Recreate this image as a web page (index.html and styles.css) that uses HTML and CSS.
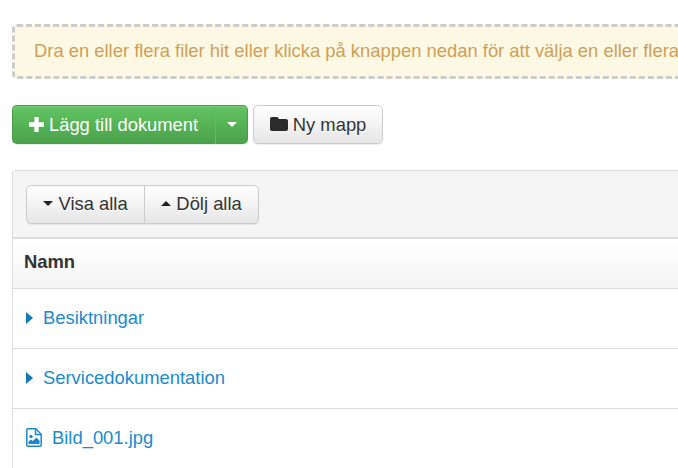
FILE: index.html
```html
<!DOCTYPE html>
<html lang="sv">
<head>
<meta charset="utf-8">
<title>Dokument</title>
<link rel="stylesheet" href="styles.css">
</head>
<body>
<main class="page">
  <div class="dropzone">Dra en eller flera filer hit eller klicka på knappen nedan för att välja en eller flera</div>
  <div class="toolbar">
    <div class="btn-group">
      <button class="btn btn-success btn-main"><svg class="icon-plus" viewBox="0 0 14 14" width="15" height="15"><path d="M5 0h4v5h5v4H9v5H5V9H0V5h5z" fill="#fff"/></svg> Lägg till dokument</button>
      <button class="btn btn-success btn-caret"><span class="caret caret-white"></span></button>
    </div>
    <button class="btn btn-default btn-folder"><svg class="icon-folder" viewBox="0 0 18 14" width="18" height="14"><path d="M2 0h4.500c1 0 1.600.5 2 1.300L9 2h7c1.100 0 2 .9 2 2v8c0 1.100-.9 2-2 2H2c-1.100 0-2-.9-2-2V2C0 .9.9 0 2 0z" fill="#2b2b2b"/></svg> Ny mapp</button>
  </div>
  <section class="panel">
    <div class="panel-head">
      <div class="btn-group">
        <button class="btn btn-default btn-toggle"><span class="caret caret-dark"></span> Visa alla</button>
        <button class="btn btn-default btn-toggle btn-join"><span class="caret caret-dark caret-up"></span> Dölj alla</button>
      </div>
    </div>
    <div class="row row-head">Namn</div>
    <div class="row"><span class="arrow"></span><a class="link" href="#">Besiktningar</a></div>
    <div class="row"><span class="arrow"></span><a class="link" href="#">Servicedokumentation</a></div>
    <div class="row"><svg class="icon-file" viewBox="0 0 16 19" width="16" height="19"><path d="M1.500.8h8.300l5.400 5.400v10.800c0 .7-.5 1.200-1.200 1.200H2c-.7 0-1.200-.5-1.200-1.200V2c0-.7.300-1.200.7-1.200z" fill="none" stroke="#1a88c9" stroke-width="1.500"/><path d="M9.500 1v5.500H15" fill="none" stroke="#1a88c9" stroke-width="1.500"/><circle cx="5" cy="8.500" r="1.700" fill="#1a88c9"/><path d="M2.500 16v-2.500l2.500-2 1.800 1.500 3.700-3.500 3 3V16z" fill="#1a88c9"/></svg><a class="link" href="#">Bild_001.jpg</a></div>
  </section>
</main>
</body>
</html>
```
FILE: styles.css
```css
html, body {
  margin: 0;
  height: 468px;
  overflow: hidden;
  background: #fff;
}
body {
  font-family: "Liberation Sans", Arial, sans-serif;
  font-size: 18.4px;
  color: #333;
}
.page {
  width: 1100px;
  padding: 24px 0 0 12px;
  box-sizing: border-box;
}
.dropzone {
  height: 55px;
  box-sizing: border-box;
  border: 3px dashed #ccc;
  border-radius: 5px;
  background: #fcf8e3;
  color: #cf9f58;
  padding: 0 19px;
  line-height: 47px;
  white-space: nowrap;
}
.toolbar {
  display: flex;
  gap: 5px;
  margin-top: 26px;
}
.btn-group {
  display: flex;
}
.btn {
  font: inherit;
  height: 39px;
  box-sizing: border-box;
  border: 1px solid #ccc;
  border-radius: 5px;
  padding: 0;
  display: flex;
  align-items: center;
  justify-content: center;
  white-space: pre;
}
.btn-success {
  color: #fff;
  border-color: #4a9a4a;
  background: linear-gradient(#62c462, #4ba24b);
  box-shadow: inset 0 1px 0 rgba(255,255,255,.15), 0 1px 1px rgba(0,0,0,.075);
}
.btn-main {
  width: 203px;
  padding-right: 1px;
  border-radius: 5px 0 0 5px;
  border-right: 0;
}
.btn-caret {
  width: 33px;
  border-radius: 0 5px 5px 0;
  border-left: 1px solid #6ab66a;
}
.btn-default {
  color: #333;
  background: linear-gradient(#fff, #e6e6e6);
  border-color: #ccc;
  box-shadow: inset 0 1px 0 rgba(255,255,255,.15), 0 1px 1px rgba(0,0,0,.075);
  text-shadow: 0 1px 0 #fff;
}
.btn-folder {
  width: 130px;
}
.icon-plus {
  display: block;
  margin-bottom: 1px;
}
.icon-folder {
  display: block;
  margin-bottom: 2px;
}
.caret {
  display: inline-block;
  width: 0;
  height: 0;
  border-left: 5.500px solid transparent;
  border-right: 5.500px solid transparent;
  border-top: 5.500px solid #fff;
}
.caret-dark {
  border-top-color: #222;
}
.caret-up {
  border-top: 0;
  border-bottom: 5.500px solid #222;
}
.panel {
  margin-top: 26px;
  border: 1px solid #ddd;
  border-right: 0;
  border-bottom: 0;
  border-radius: 4px 0 0 0;
}
.panel-head {
  height: 68px;
  box-sizing: border-box;
  background: #f5f5f5;
  border-bottom: 2px solid #ddd;
  padding: 14px 13px 0;
}
.btn-toggle {
  width: 119px;
  padding-bottom: 2px;
  border-radius: 5px 0 0 5px;
}
.btn-join {
  width: 114px;
  border-left: 0;
  border-radius: 0 5px 5px 0;
}
.row {
  height: 60px;
  box-sizing: border-box;
  border-bottom: 1px solid #ddd;
  display: flex;
  align-items: center;
  padding: 0 11px 2px;
}
.row-head {
  height: 50px;
  padding-bottom: 4px;
  font-weight: 700;
  background: linear-gradient(#fff, #f5f5f5);
}
.arrow {
  width: 0;
  height: 0;
  border-top: 6px solid transparent;
  border-bottom: 6px solid transparent;
  border-left: 7px solid #137ab8;
  margin-left: 2px;
  margin-right: 10px;
}
.link {
  color: #1a8bcd;
  text-decoration: none;
}
.icon-file {
  margin-left: 2px;
  margin-right: 10px;
  display: block;
}
```
